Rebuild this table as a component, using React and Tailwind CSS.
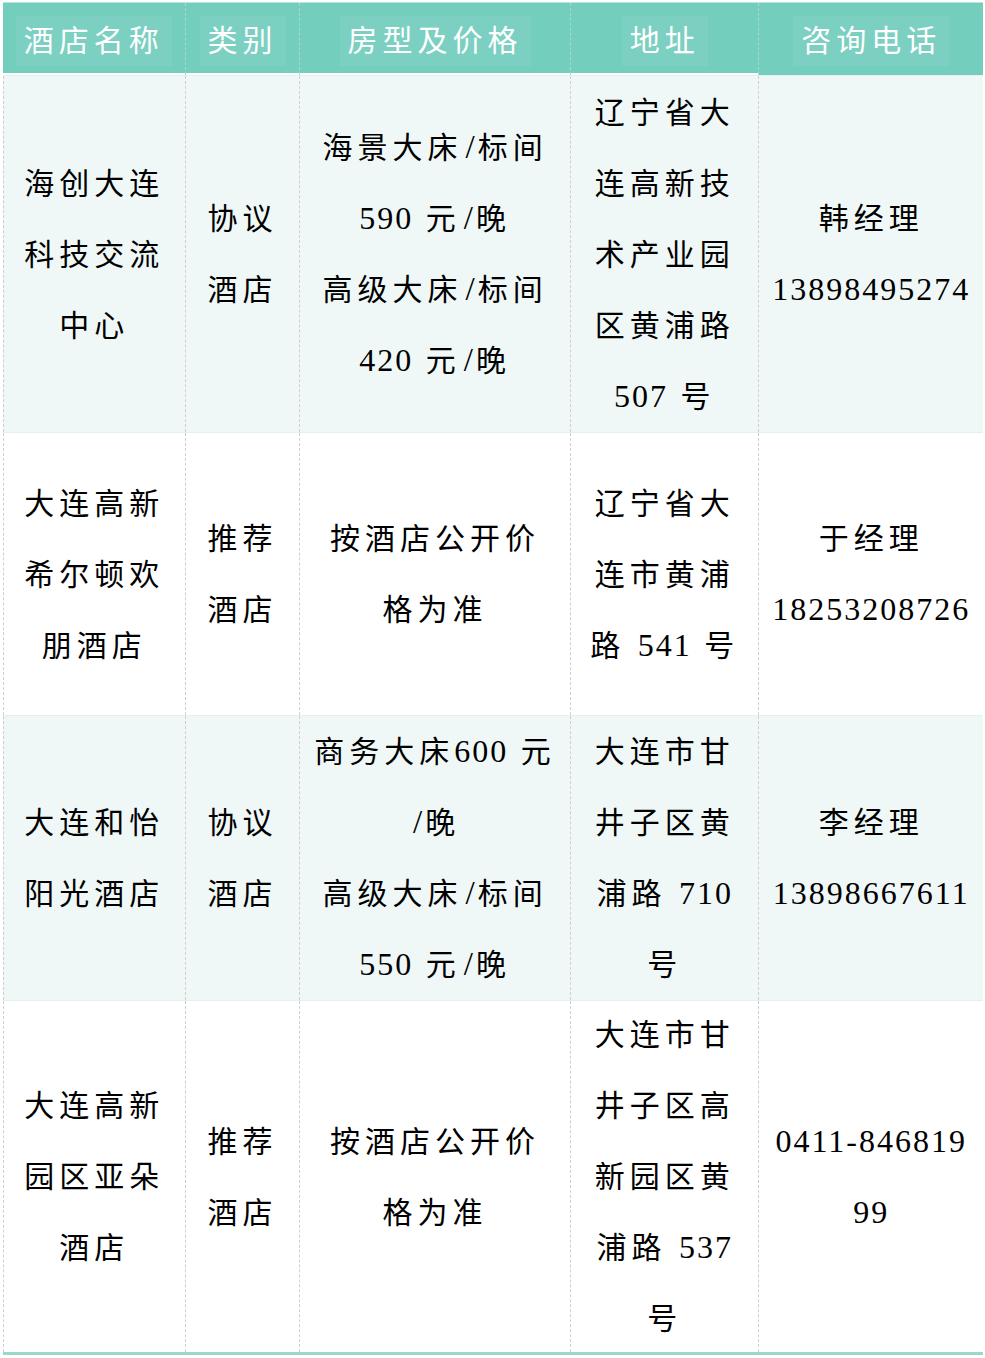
const headers = ["酒店名称", "类别", "房型及价格", "地址", "咨询电话"];

const widths = ["w-[182px]", "w-[115px]", "w-[271px]", "w-[189px]", "w-[225px]"];

const rows = [
  {
    h: "h-[357px]",
    bg: "bg-[#f0f8f7]",
    cells: [
      ["海创大连", "科技交流", "中心"],
      ["协议", "酒店"],
      ["海景大床/标间", "590 元/晚", "高级大床/标间", "420 元/晚"],
      ["辽宁省大", "连高新技", "术产业园", "区黄浦路", "507 号"],
      ["韩经理", "13898495274"],
    ],
  },
  {
    h: "h-[283px]",
    bg: "bg-white",
    cells: [
      ["大连高新", "希尔顿欢", "朋酒店"],
      ["推荐", "酒店"],
      ["按酒店公开价", "格为准"],
      ["辽宁省大", "连市黄浦", "路 541 号"],
      ["于经理", "18253208726"],
    ],
  },
  {
    h: "h-[285px]",
    bg: "bg-[#f0f8f7]",
    cells: [
      ["大连和怡", "阳光酒店"],
      ["协议", "酒店"],
      ["商务大床600 元", "/晚", "高级大床/标间", "550 元/晚"],
      ["大连市甘", "井子区黄", "浦路 710", "号"],
      ["李经理", "13898667611"],
    ],
  },
  {
    h: "h-[352px]",
    bg: "bg-white",
    cells: [
      ["大连高新", "园区亚朵", "酒店"],
      ["推荐", "酒店"],
      ["按酒店公开价", "格为准"],
      ["大连市甘", "井子区高", "新园区黄", "浦路 537", "号"],
      ["0411-846819", "99"],
    ],
  },
];

// digits and slashes are set a little bigger than the CJK text, as in the doc
const Line = ({ text }) => {
  const parts = text.split(/(\/|[0-9-]+)/).filter((p) => p !== "");
  return (
    <div className="leading-[71px] whitespace-nowrap">
      {parts.map((p, i) => {
        if (p === "/")
          return (
            <span key={i} className="text-[33px] mx-[3px]">
              /
            </span>
          );
        if (/[0-9]/.test(p))
          return (
            <span key={i} className="text-[32px] tracking-[2px]">
              {p}
            </span>
          );
        return (
          <span key={i} className="tracking-[5px]">
            {p}
          </span>
        );
      })}
    </div>
  );
};

export default function App() {
  return (
    <div
      className="bg-white w-[985px] min-h-[1358px] pl-[3px] pt-[2px]"
      style={{ fontFamily: '"Liberation Serif", "Noto Sans CJK SC", serif' }}
    >
      <div className="w-[980px]">
        <div className="flex h-[73px] bg-[#74cebe] border-t border-[#b9e4dc]">
          {headers.map((t, i) => (
            <div
              key={t}
              className={`${widths[i]} flex items-center justify-center pt-1 ${
                i > 0 ? "border-l border-dashed border-[#a6d9cf]" : ""
              } ${i < 4 ? "shadow-[inset_0_-2px_0_#ffffff]" : ""}`}
            >
              <span className="bg-white/5 px-2 py-1 text-white text-[30px] tracking-[5px] leading-[42px]">
                {t}
              </span>
            </div>
          ))}
        </div>
        {rows.map((r, ri) => (
          <div
            key={ri}
            className={`flex ${r.h} ${r.bg} border-t border-[#e2f1ee]`}
          >
            {r.cells.map((lines, ci) => (
              <div
                key={ci}
                className={`${widths[ci]} flex flex-col items-center justify-center text-[30px] text-black border-l border-dashed border-[#cfcfcf]`}
              >
                {lines.map((l, li) => (
                  <Line key={li} text={l} />
                ))}
              </div>
            ))}
          </div>
        ))}
        <div className="h-[3px] bg-[#9ad8cc]" />
      </div>
    </div>
  );
}
